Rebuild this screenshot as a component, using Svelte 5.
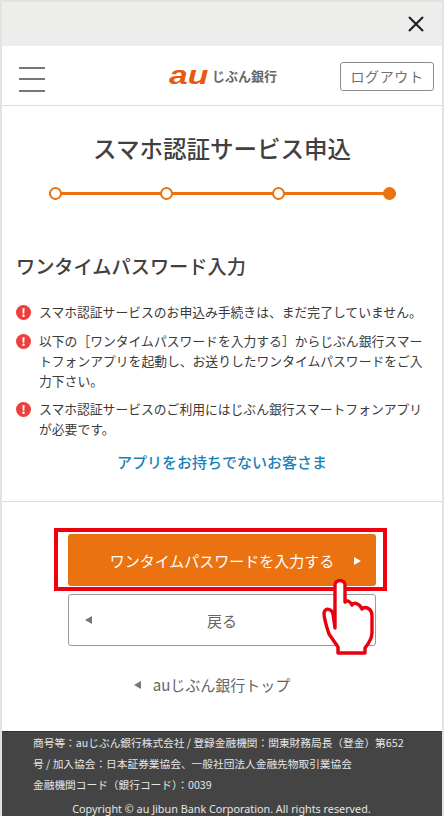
<script>
  const notices = [
    'スマホ認証サービスのお申込み手続きは、まだ完了していません。',
    '以下の［ワンタイムパスワードを入力する］からじぶん銀行スマートフォンアプリを起動し、お送りしたワンタイムパスワードをご入力下さい。',
    'スマホ認証サービスのご利用にはじぶん銀行スマートフォンアプリが必要です。'
  ]
  const steps = [false, false, false, true]
</script>

<div class="frame">
  <div class="topbar">
    <svg class="close" viewBox="0 0 16 16" width="16" height="16">
      <path d="M1 1 L15 15 M15 1 L1 15" stroke="#1c1c1c" stroke-width="2" fill="none" />
    </svg>
  </div>

  <header class="head">
    <div class="burger"><span></span><span></span><span></span></div>
    <div class="logo"><span class="au">au</span><span class="bank">じぶん銀行</span></div>
    <button class="logout">ログアウト</button>
  </header>

  <main class="main">
    <h1>スマホ認証サービス申込</h1>
    <div class="steps">
      {#each steps as on}
        <span class="dot" class:on></span>
      {/each}
    </div>

    <h2>ワンタイムパスワード入力</h2>
    <ul class="notices">
      {#each notices as text}
        <li>
          <svg class="warn" viewBox="0 0 16 16" width="15" height="15">
            <circle cx="8" cy="8" r="8" fill="#ee3e3e" />
            <path d="M6.8 3.4 h2.4 l-0.4 5.8 h-1.6 z" fill="#fff" />
            <circle cx="8" cy="11.4" r="1.3" fill="#fff" />
          </svg>
          <p>{text}</p>
        </li>
      {/each}
    </ul>
    <a class="link" href="#top">アプリをお持ちでないお客さま</a>
  </main>

  <section class="actions">
    <div class="highlight">
      <button class="primary">ワンタイムパスワードを入力する<i class="tri right"></i></button>
    </div>
    <button class="back"><i class="tri left"></i>戻る</button>
    <a class="toplink" href="#top"><i class="tri left dark"></i>auじぶん銀行トップ</a>

    <svg class="hand" viewBox="0 0 56 80" width="56" height="80">
      <path
        d="M15 50 L13 36 C12 31 5 29 4 35 C4 40 7 50 9 56 L18 69 V75 H45 V70 C49 65 52 60 52 55 V38 C52 30 45 28 42 31 C39 25 34 24 32 27 C30 23 27 22 25 24 V7 C25 1 15 1 15 7 Z"
        fill="#fff" stroke="#e8000f" stroke-width="3.4" stroke-linejoin="round" />
    </svg>
  </section>

  <footer class="foot">
    <p class="meta">商号等：auじぶん銀行株式会社 / 登録金融機関：関東財務局長（登金）第652号 / 加入協会：日本証券業協会、一般社団法人金融先物取引業協会<br />金融機関コード（銀行コード）：0039</p>
    <p class="copy">Copyright © au Jibun Bank Corporation. All rights reserved.</p>
  </footer>
</div>

<style>
  :global(body) {
    margin: 0;
    background: #e2e3e1;
  }

  .frame {
    box-sizing: border-box;
    height: 816px;
    padding: 2px 2px 0;
    display: flex;
    flex-direction: column;
    overflow: hidden;
    font-family: "Noto Sans CJK JP", "Noto Sans", sans-serif;
    color: #333;
    background: #e2e3e1;
  }

  .topbar {
    height: 44px;
    flex: none;
    background: #edeeec;
    display: flex;
    align-items: center;
    justify-content: flex-end;
    padding-right: 18px;
  }

  .head {
    height: 59px;
    flex: none;
    background: #fff;
    border-bottom: 1px solid #dcdcdc;
    display: grid;
    grid-template-columns: 1fr auto 1fr;
    align-items: center;
    padding: 0 8px 0 17px;
  }

  .burger {
    width: 26px;
    height: 25px;
    margin-top: 7px;
    display: flex;
    flex-direction: column;
    justify-content: space-between;
  }

  .burger span {
    height: 2px;
    background: #777;
  }

  .logo {
    display: flex;
    align-items: center;
    gap: 4px;
    margin-left: -7px;
    margin-top: -1px;
  }

  .au {
    font-family: "Liberation Sans", sans-serif;
    font-size: 25px;
    line-height: 25px;
    font-weight: 700;
    font-style: italic;
    color: #e8590f;
    transform: scaleX(1.35);
    padding: 0 5px;
  }

  .bank {
    font-size: 13px;
    font-weight: 700;
    color: #666;
  }

  .logout {
    justify-self: end;
    width: 94px;
    height: 29px;
    margin-top: 1px;
    padding: 0;
    background: #fff;
    border: 1px solid #8c8c8c;
    border-radius: 3px;
    font: inherit;
    font-size: 14px;
    letter-spacing: 0.6px;
    color: #707070;
  }

  .main {
    height: 396px;
    flex: none;
    box-sizing: border-box;
    background: #fff;
    border-bottom: 1px solid #dcdcdc;
    padding: 0 15px;
    display: flex;
    flex-direction: column;
  }

  h1 {
    margin: 24px 0 0;
    height: 36px;
    font-size: 23.5px;
    line-height: 36px;
    font-weight: 500;
    text-align: center;
    color: #404040;
  }

  .steps {
    margin: 21px 31px 0 32px;
    height: 13px;
    display: flex;
    justify-content: space-between;
    align-items: center;
    background: linear-gradient(#ea7210, #ea7210) center / 100% 3px no-repeat;
  }

  .dot {
    box-sizing: border-box;
    width: 13px;
    height: 13px;
    border: 2px solid #ea7210;
    border-radius: 50%;
    background: #fff;
  }

  .dot.on {
    background: #ea7210;
  }

  h2 {
    margin: 52px 0 0 -1px;
    font-size: 19.2px;
    line-height: 28px;
    font-weight: 500;
    color: #404040;
  }

  .notices {
    list-style: none;
    margin: 22px 0 0 -1px;
    padding: 0;
    display: flex;
    flex-direction: column;
    gap: 8.5px;
  }

  .notices li {
    display: flex;
    gap: 8px;
  }

  .warn {
    flex: none;
    margin-top: 3px;
  }

  .notices p {
    margin: 0;
    font-size: 12.8px;
    line-height: 20px;
    color: #3a3a3a;
  }

  .link {
    margin-top: 12px;
    text-align: center;
    font-size: 15px;
    line-height: 22px;
    font-weight: 500;
    color: #1c7fb6;
    text-decoration: none;
  }

  .actions {
    position: relative;
    flex: 1;
    background: #fff;
    display: flex;
    flex-direction: column;
    align-items: center;
    padding-top: 26px;
    min-height: 0;
  }

  .highlight {
    box-sizing: border-box;
    width: 333px;
    height: 63px;
    margin-right: 3px;
    border: 4px solid #f0000f;
    padding: 2px 0 0 10px;
    background: #fff;
    display: flex;
    align-items: flex-start;
  }

  .primary {
    position: relative;
    width: 308px;
    height: 52px;
    padding: 0;
    border: 0;
    border-radius: 3px;
    background: #ea7210;
    color: #fff;
    font: inherit;
    font-size: 15px;
  }

  .tri {
    position: absolute;
    top: 50%;
    width: 0;
    height: 0;
    margin-top: -4px;
    border-top: 4px solid transparent;
    border-bottom: 4px solid transparent;
  }

  .tri.right {
    right: 15px;
    margin-top: -3px;
    border-left: 7px solid #fff;
  }

  .tri.left {
    left: 16px;
    border-right: 7px solid #777;
  }

  .back {
    position: relative;
    width: 308px;
    height: 52px;
    margin-top: 3px;
    padding: 0;
    background: #fff;
    border: 1px solid #9a9a9a;
    border-radius: 3px;
    font: inherit;
    font-size: 15px;
    color: #666;
  }

  .toplink {
    position: relative;
    margin: 28px 20px 0 0;
    padding-left: 19px;
    font-size: 15px;
    line-height: 22px;
    color: #666;
    text-decoration: none;
  }

  .tri.left.dark {
    left: 0;
  }

  .hand {
    position: absolute;
    left: 318px;
    top: 76px;
  }

  .foot {
    flex: none;
    height: 85px;
    box-sizing: border-box;
    background: #444;
    border-top: 1px solid #333;
    padding: 0 32px 0 31px;
    color: #e6e6e6;
  }

  .meta {
    margin: 0;
    font-size: 10.7px;
    line-height: 21px;
  }

  .copy {
    margin: 4px -20px 0;
    font-family: "Noto Sans", sans-serif;
    font-size: 10.8px;
    line-height: 20px;
    text-align: center;
  }
</style>
